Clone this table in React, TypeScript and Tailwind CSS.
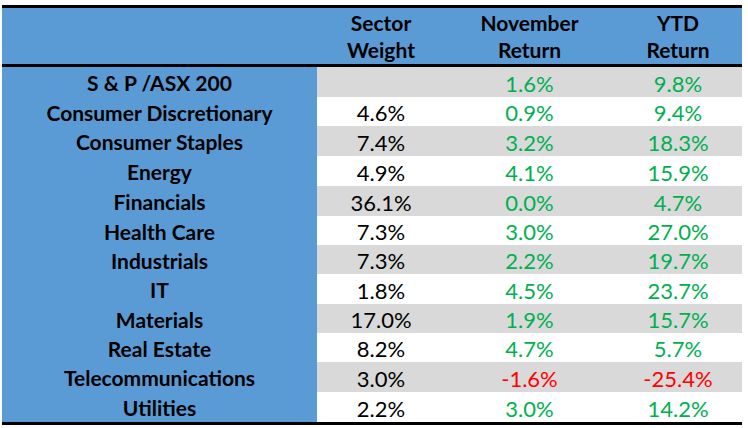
const rows = [
  { name: "S & P /ASX 200", weight: "", nov: "1.6%", ytd: "9.8%", h: "h-[30px]" },
  { name: "Consumer Discretionary", weight: "4.6%", nov: "0.9%", ytd: "9.4%", h: "h-[29px]" },
  { name: "Consumer Staples", weight: "7.4%", nov: "3.2%", ytd: "18.3%", h: "h-[30px]" },
  { name: "Energy", weight: "4.9%", nov: "4.1%", ytd: "15.9%", h: "h-[30px]" },
  { name: "Financials", weight: "36.1%", nov: "0.0%", ytd: "4.7%", h: "h-[30px]" },
  { name: "Health Care", weight: "7.3%", nov: "3.0%", ytd: "27.0%", h: "h-[29px]" },
  { name: "Industrials", weight: "7.3%", nov: "2.2%", ytd: "19.7%", h: "h-[29px]" },
  { name: "IT", weight: "1.8%", nov: "4.5%", ytd: "23.7%", h: "h-[30px]" },
  { name: "Materials", weight: "17.0%", nov: "1.9%", ytd: "15.7%", h: "h-[29px]" },
  { name: "Real Estate", weight: "8.2%", nov: "4.7%", ytd: "5.7%", h: "h-[29px]" },
  { name: "Telecommunications", weight: "3.0%", nov: "-1.6%", ytd: "-25.4%", h: "h-[30px]" },
  { name: "Utilities", weight: "2.2%", nov: "3.0%", ytd: "14.2%", h: "h-[30px]" },
];

function tone(v: string) {
  return v.startsWith("-") ? "text-[#ff0000]" : "text-[#00b050]";
}

export default function App() {
  return (
    <div className="h-[428px] w-[748px] overflow-hidden bg-white pt-[5px] pl-[2px] font-['Lato',sans-serif] text-[21px] text-black">
      <div className="w-[740px] border-t-[3px] border-b-[3px] border-black">
        {/* header */}
        <div className="flex h-[59px] border-b-[3px] border-black bg-[#5b9bd5] font-bold leading-[27px]">
          <div className="w-[315px]" />
          <div className="flex w-[128px] flex-col items-center justify-center text-center">
            <span>Sector</span>
            <span>Weight</span>
          </div>
          <div className="flex w-[169px] flex-col items-center justify-center text-center">
            <span>November</span>
            <span>Return</span>
          </div>
          <div className="flex w-[128px] flex-col items-center justify-center text-center">
            <span>YTD</span>
            <span>Return</span>
          </div>
        </div>

        {rows.map((r, i) => (
          <div className={`flex ${r.h}`} key={r.name}>
            <div className="flex w-[315px] items-center justify-center bg-[#5b9bd5] pt-[2px] font-bold">
              {r.name}
            </div>
            <div
              className={`flex flex-1 items-center pt-[2px] text-[22px] ${
                i % 2 === 0 ? "bg-[#d9d9d9]" : "bg-white"
              }`}
            >
              <div className="w-[128px] text-center">{r.weight}</div>
              <div className={`w-[169px] text-center ${tone(r.nov)}`}>{r.nov}</div>
              <div className={`w-[128px] text-center ${tone(r.ytd)}`}>{r.ytd}</div>
            </div>
          </div>
        ))}
      </div>
    </div>
  );
}
